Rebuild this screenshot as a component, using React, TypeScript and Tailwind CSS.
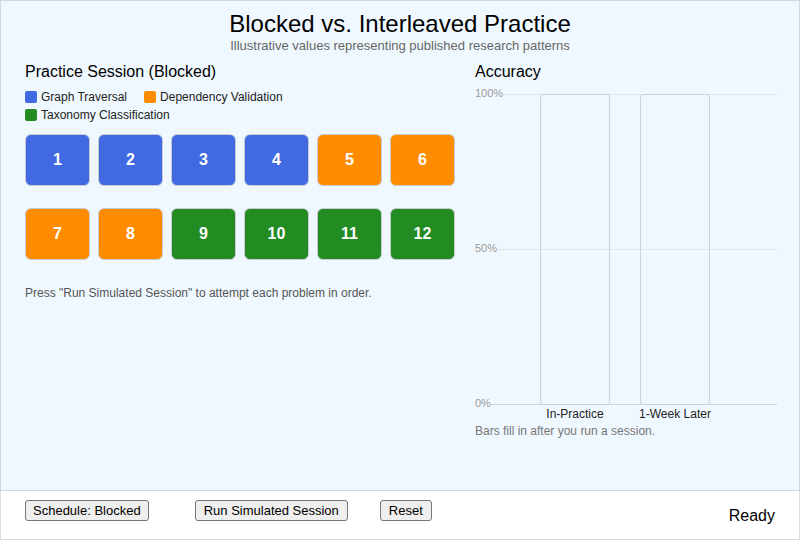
import { useState } from "react";

type Topic = "graph" | "dependency" | "taxonomy";

const TOPIC_STYLE: Record<Topic, string> = {
  graph: "bg-[#4169e1]",
  dependency: "bg-[#ff8c00]",
  taxonomy: "bg-[#228b22]",
};

const LEGEND: { topic: Topic; label: string }[] = [
  { topic: "graph", label: "Graph Traversal" },
  { topic: "dependency", label: "Dependency Validation" },
  { topic: "taxonomy", label: "Taxonomy Classification" },
];

const BLOCKED: Topic[] = [
  "graph", "graph", "graph", "graph",
  "dependency", "dependency", "dependency", "dependency",
  "taxonomy", "taxonomy", "taxonomy", "taxonomy",
];

const INTERLEAVED: Topic[] = [
  "graph", "dependency", "taxonomy", "dependency",
  "graph", "taxonomy", "taxonomy", "graph",
  "dependency", "taxonomy", "graph", "dependency",
];

function Legend() {
  return (
    <div className="mt-[6px] flex w-[300px] flex-wrap gap-x-[17px]">
      {LEGEND.map((item) => (
        <div key={item.topic} className="flex h-[18px] items-center gap-[4px] text-[12px] text-[#222]">
          <span className={`h-[12px] w-[12px] rounded-[2px] ${TOPIC_STYLE[item.topic]}`} />
          {item.label}
        </div>
      ))}
    </div>
  );
}

function AccuracyChart() {
  const ticks = [
    { label: "100%", top: "top-0" },
    { label: "50%", top: "top-[155px]" },
    { label: "0%", top: "top-[310px]" },
  ];
  const bars = [
    { label: "In-Practice", left: "left-[65px]" },
    { label: "1-Week Later", left: "left-[165px]" },
  ];

  return (
    <div className="mt-[12px]">
      <div className="relative h-[310px] w-[302px]">
        {ticks.map((t) => (
          <div key={t.label} className={`absolute left-0 right-0 ${t.top} h-0`}>
            <div className={`absolute left-0 right-0 top-0 h-px ${t.label === "0%" ? "bg-[#d4d4d4]" : "bg-[#e2e4e8]"}`} />
            <span className="absolute left-0 top-[-8px] bg-[#f0f8ff] text-[11px] leading-[14px] text-[#999]">
              {t.label}
            </span>
          </div>
        ))}
        {bars.map((b) => (
          <div
            key={b.label}
            className={`absolute top-0 ${b.left} h-[311px] w-[70px] rounded-[3px] border-[1.5px] border-[#cdd0d4]`}
          />
        ))}
      </div>
      <div className="relative h-[20px] w-[302px] text-[12px] text-[#222]">
        {bars.map((b) => (
          <span key={b.label} className={`absolute ${b.left} top-[3px] w-[70px] whitespace-nowrap text-center leading-[14px]`}>
            <span className="-mx-10 block">{b.label}</span>
          </span>
        ))}
      </div>
      <p className="text-[12px] leading-[14px] text-[#777]">Bars fill in after you run a session.</p>
    </div>
  );
}

export default function App() {
  const [interleaved, setInterleaved] = useState(false);
  const order = interleaved ? INTERLEAVED : BLOCKED;
  const mode = interleaved ? "Interleaved" : "Blocked";

  return (
    <div className="flex h-[540px] w-[800px] flex-col font-['Liberation_Sans',Arial,sans-serif] text-[#111]">
      <main className="h-[491px] border border-[#d4d7dc] bg-[#f0f8ff]">
        <header className="pt-[9px] text-center">
          <h1 className="text-[24px] leading-[28px] text-black">Blocked vs. Interleaved Practice</h1>
          <p className="text-[13px] leading-[16px] text-[#666]">
            Illustrative values representing published research patterns
          </p>
        </header>

        <div className="mt-[8px] flex gap-[20px] pl-[24px]">
          <section className="w-[430px]">
            <h2 className="text-[16px] leading-[20px] text-black">Practice Session ({mode})</h2>
            <Legend />
            <div className="mt-[10px] grid grid-cols-[repeat(6,65px)] gap-x-[8px] gap-y-[22px]">
              {order.map((topic, i) => (
                <div
                  key={i}
                  className={`flex h-[52px] items-center justify-center rounded-[6px] border border-[#c8ccd2] text-[16px] font-bold text-white ${TOPIC_STYLE[topic]}`}
                >
                  {i + 1}
                </div>
              ))}
            </div>
            <p className="mt-[25px] text-[12px] leading-[16px] text-[#555]">
              Press "Run Simulated Session" to attempt each problem in order.
            </p>
          </section>

          <section className="w-[302px]">
            <h2 className="text-[16px] leading-[20px] text-black">Accuracy</h2>
            <AccuracyChart />
          </section>
        </div>
      </main>

      <footer className="flex flex-1 items-start border border-t-0 border-[#dcdcdc] bg-white pl-[24px] pr-[24px] pt-[9px]">
        <button
          onClick={() => setInterleaved((v) => !v)}
          className="h-[21px] rounded-[3px] border border-[#767676] bg-[#efefef] px-[7px] text-[13px] leading-[19px] text-black"
        >
          Schedule: {mode}
        </button>
        <button className="ml-[46px] h-[21px] rounded-[3px] border border-[#767676] bg-[#efefef] px-[8px] text-[13px] leading-[19px] text-black">
          Run Simulated Session
        </button>
        <button
          onClick={() => setInterleaved(false)}
          className="ml-[32px] h-[21px] rounded-[3px] border border-[#767676] bg-[#efefef] px-[8px] text-[13px] leading-[19px] text-black"
        >
          Reset
        </button>
        <span className="ml-auto mt-[6px] text-[16px] leading-[20px] text-black">Ready</span>
      </footer>
    </div>
  );
}
